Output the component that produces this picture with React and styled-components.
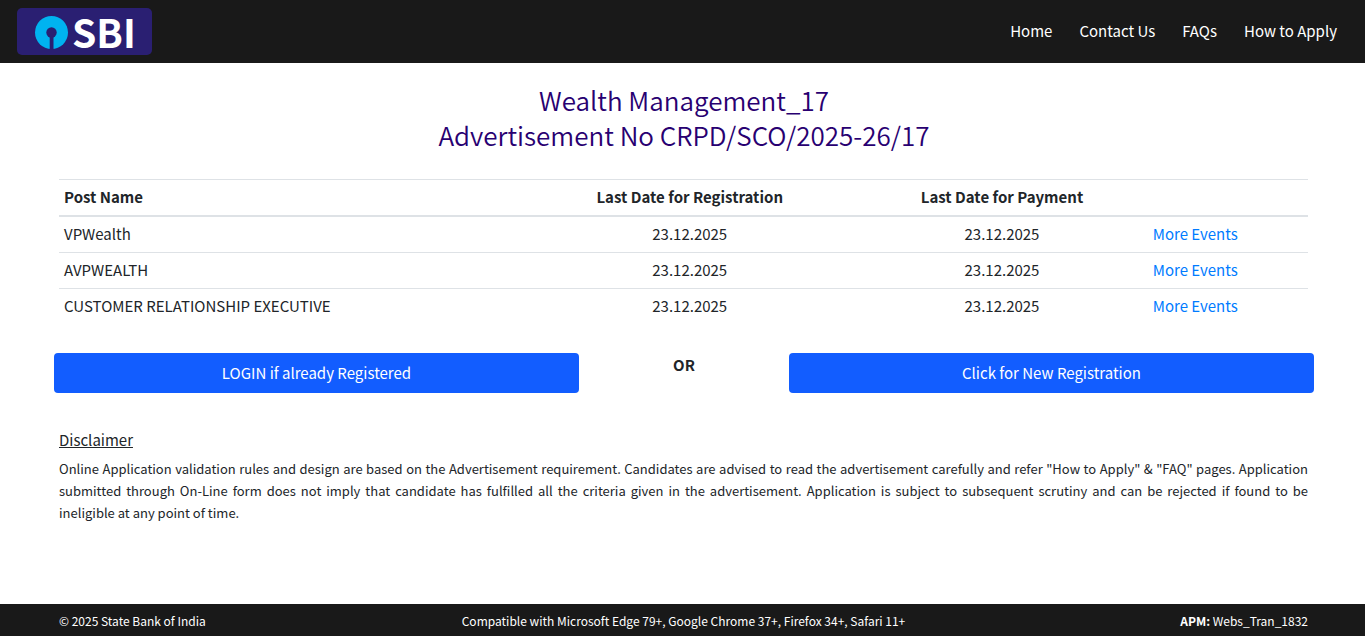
import React from "react";
import styled, { createGlobalStyle } from "styled-components";

const posts = [
    { id: 1, name: "VPWealth", registration: "23.12.2025", payment: "23.12.2025" },
    { id: 2, name: "AVPWEALTH", registration: "23.12.2025", payment: "23.12.2025" },
    { id: 3, name: "CUSTOMER RELATIONSHIP EXECUTIVE", registration: "23.12.2025", payment: "23.12.2025" },
];

const menus = ["Home", "Contact Us", "FAQs", "How to Apply"];

const Logo = () => (
    <StLogo viewBox="0 0 135 47" role="img" aria-label="SBI">
        <rect width="135" height="47" rx="5" fill="#2a1f72" />
        <circle cx="34.5" cy="24.5" r="16.5" fill="#00b3f0" />
        <circle cx="34.5" cy="24.5" r="5.2" fill="#2a1f72" />
        <rect x="32.7" y="27" width="3.8" height="15" fill="#2a1f72" />
        <StLogoText x="55" y="40">SBI</StLogoText>
    </StLogo>
);

const App = () => {
    return (
        <StPage>
            <GlobalStyle />
            <StHeader>
                <a href="#home"><Logo /></a>
                <StNav>
                    {menus.map((menu) => (
                        <StNavLink key={menu} href="#">{menu}</StNavLink>
                    ))}
                </StNav>
            </StHeader>

            <StMain>
                <StTitle>
                    Wealth Management_17
                    <br />
                    Advertisement No CRPD/SCO/2025-26/17
                </StTitle>

                <StSection>
                    <StTable>
                        <colgroup>
                            <StCol $width="32.5%" />
                            <StCol $width="36%" />
                            <StCol $width="14%" />
                            <StCol />
                        </colgroup>
                        <thead>
                            <tr>
                                <StTh $left>Post Name</StTh>
                                <StTh>Last Date for Registration</StTh>
                                <StTh>Last Date for Payment</StTh>
                                <StTh />
                            </tr>
                        </thead>
                        <tbody>
                            {posts.map((post) => (
                                <StRow key={post.id}>
                                    <StTd $left>{post.name}</StTd>
                                    <StTd>{post.registration}</StTd>
                                    <StTd>{post.payment}</StTd>
                                    <StLinkTd><StLink href="#">More Events</StLink></StLinkTd>
                                </StRow>
                            ))}
                        </tbody>
                    </StTable>
                </StSection>

                <StActions>
                    <StButton type="button">LOGIN if already Registered</StButton>
                    <StOr>OR</StOr>
                    <StButton type="button">Click for New Registration</StButton>
                </StActions>

                <StSection>
                    <StSubTitle>Disclaimer</StSubTitle>
                    <StText>
                        Online Application validation rules and design are based on the Advertisement requirement. Candidates are advised to read the advertisement carefully and refer "How to Apply" &amp; "FAQ" pages. Application submitted through On-Line form does not imply that candidate has fulfilled all the criteria given in the advertisement. Application is subject to subsequent scrutiny and can be rejected if found to be ineligible&nbsp;at any point of time.
                    </StText>
                </StSection>
            </StMain>

            <StFooter>
                <span>© 2025 State Bank of India</span>
                <span>Compatible with Microsoft Edge 79+, Google Chrome 37+, Firefox 34+, Safari 11+</span>
                <StVersion><b>APM:</b> Webs_Tran_1832</StVersion>
            </StFooter>
        </StPage>
    );
};

export default App;

const GlobalStyle = createGlobalStyle`
    * {
        box-sizing: border-box;
    }

    body {
        margin: 0;
        background-color: #fff;
        color: #212529;
        font-family: "Noto Sans CJK SC", "Noto Sans CJK JP", "Open Sans", sans-serif;
        font-size: 15px;
        line-height: 25px;
    }
`

const StPage = styled.div`
    min-height: 100vh;
    display: flex;
    flex-direction: column;
`

const StHeader = styled.header`
    padding: 8px 28px 8px 17px;
    background-color: #191919;

    display: flex;
    align-items: center;
    justify-content: space-between;
`

const StLogo = styled.svg`
    width: 135px;
    height: 47px;
    display: block;
    overflow: visible;
`

const StLogoText = styled.text`
    font-size: 39px;
    font-weight: 700;
    fill: #fff;
`

const StNav = styled.nav`
    padding-bottom: 2px;

    display: flex;
    gap: 27px;
`

const StNavLink = styled.a`
    color: #fff;
    text-decoration: none;
`

const StMain = styled.main`
    flex: 1;
    padding: 19px 51px 20px 54px;
`

const StTitle = styled.h1`
    margin: 0 0 27px;
    color: #280071;
    font-size: 26px;
    font-weight: 350;
    line-height: 35px;
    text-align: center;
`

const StSection = styled.section`
    padding: 0 6px 0 5px;
`

const StTable = styled.table`
    width: 100%;
    table-layout: fixed;
    border-spacing: 0;
`

const StCol = styled.col`
    width: ${(props) => props.$width || "auto"};
`

const StTh = styled.th`
    padding: 4px 5px 6px;
    border-top: 1px solid #dee2e6;
    border-bottom: 2px solid #dee2e6;
    font-weight: 700;
    text-align: ${(props) => (props.$left ? "left" : "center")};
    white-space: nowrap;
`

const StTd = styled.td`
    padding: 4px 5px 6px;
    text-align: ${(props) => (props.$left ? "left" : "center")};
`

const StLinkTd = styled(StTd)`
    padding-right: 12px;
`

const StRow = styled.tr`
    & + & > td {
        border-top: 1px solid #dee2e6;
    }
`

const StLink = styled.a`
    color: #007bff;
    text-decoration: none;
`

const StActions = styled.div`
    margin: 29px 0 34px;

    display: grid;
    grid-template-columns: 5fr 2fr 5fr;
`

const StButton = styled.button`
    height: 40px;
    padding: 0 0 2px;
    border: none;
    border-radius: 4px;
    background-color: #125dff;
    color: #fff;
    font-family: inherit;
    font-size: 15px;
    cursor: pointer;
`

const StOr = styled.div`
    font-weight: 700;
    line-height: 23px;
    text-align: center;
`

const StSubTitle = styled.h2`
    margin: 0 0 6px;
    font-size: 15px;
    font-weight: 400;
    text-decoration: underline;
`

const StText = styled.p`
    margin: 0;
    font-size: 13px;
    line-height: 22px;
    text-align: justify;
`

const StFooter = styled.footer`
    padding: 6px 57px 4px 59px;
    background-color: #191919;
    color: #fff;
    font-size: 12px;
    line-height: 22px;

    display: grid;
    grid-template-columns: 1fr auto 1fr;
`

const StVersion = styled.span`
    text-align: right;
`
